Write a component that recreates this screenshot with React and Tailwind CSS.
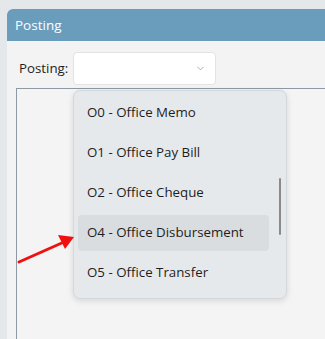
import { ChevronDown } from 'lucide-react';

const options = [
  'O0 - Office Memo',
  'O1 - Office Pay Bill',
  'O2 - Office Cheque',
  'O4 - Office Disbursement',
  'O5 - Office Transfer',
];

const App = () => {
  return (
    <div
      className="relative w-[325px] h-[339px] overflow-hidden bg-[#e4e8eb] pt-[9px] pl-[7px] flex flex-col"
      style={{ fontFamily: '"Open Sans", "Noto Sans", sans-serif' }}
    >
      {/* Window */}
      <div className="flex-1 flex flex-col bg-[#f3f3f3] rounded-tl-[6px] overflow-hidden">
        <div className="h-[32px] shrink-0 bg-[#6a9cbc] flex items-center pl-[8px] text-white text-[13.5px]">
          Posting
        </div>

        <div className="flex items-center pl-[12px] pt-[11px]">
          <span className="text-[13.3px] text-[#1e1e1e] w-[54px]">Posting:</span>
          <div className="w-[143px] h-[33px] bg-white rounded-[4px] border border-[#e3e3e3] flex items-center justify-end pr-[9px]">
            <ChevronDown size={11} strokeWidth={1.5} className="text-[#8a8a8a]" />
          </div>
        </div>

        <div className="flex-1 mt-[3px] ml-[9px] border-t border-l border-[#8d9aa5] bg-[#f4f4f4]" />
      </div>

      {/* Dropdown menu */}
      <div className="absolute left-[73px] top-[90px] w-[214px] h-[209px] rounded-[7px] bg-[#e6e9ec] border border-[#d3d8dd] shadow-[0_2px_6px_rgba(0,0,0,0.12)] pt-[2px]">
        {options.map((opt, i) => (
          <div key={opt} className="h-[40px] flex items-center pl-[4px] pr-[17px]">
            <div
              className={`w-full h-[36px] flex items-center pl-[9px] rounded-[4px] text-[13.3px] text-[#1e1e1e] ${
                i === 3 ? 'bg-[#dadde0]' : ''
              }`}
            >
              {opt}
            </div>
          </div>
        ))}
        <div className="absolute left-[205px] top-[87px] w-[2px] h-[57px] rounded-full bg-[#8a8a8a]" />
      </div>

      {/* Red arrow */}
      <svg className="absolute left-0 top-0" width="325" height="339" viewBox="0 0 325 339">
        <line x1="19" y1="262" x2="64" y2="242" stroke="#f01010" strokeWidth="3" strokeLinecap="round" />
        <polygon points="74,237 58,235 65,249" fill="#f01010" />
      </svg>
    </div>
  );
};

export default App;
